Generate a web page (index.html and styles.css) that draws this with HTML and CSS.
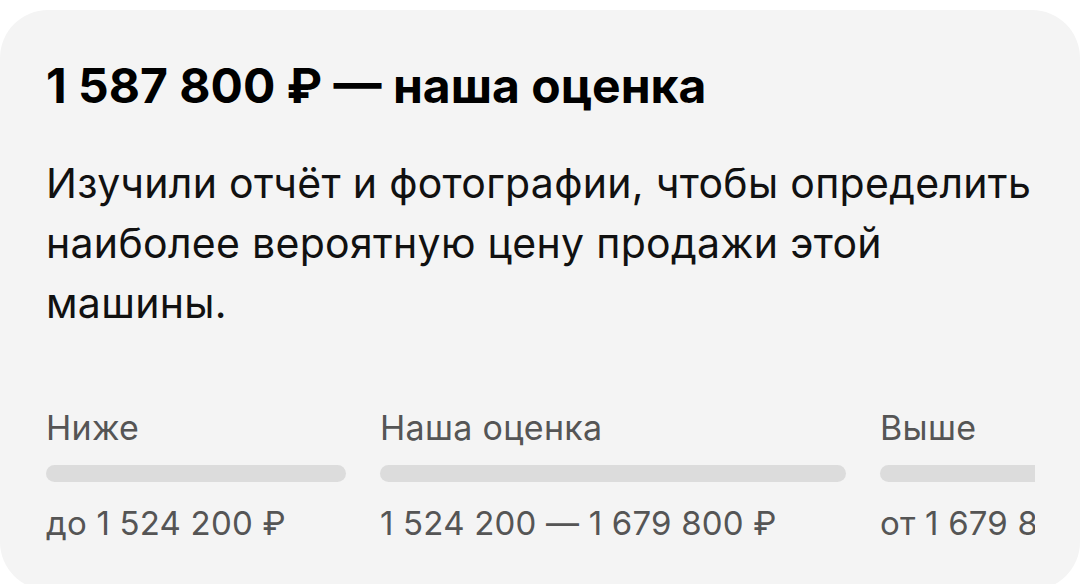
FILE: index.html
```html
<!DOCTYPE html>
<html lang="ru">
<head>
  <meta charset="UTF-8" />
  <meta name="viewport" content="width=device-width, initial-scale=1" />
  <title>Оценка автомобиля</title>
  <link rel="stylesheet" href="styles.css">
</head>
<body>
  <div class="estimate-card">
    <h1 class="estimate-title">1 587 800 ₽ — наша оценка</h1>
    <p class="estimate-text">Изучили отчёт и фотографии, чтобы определить наиболее вероятную цену продажи этой машины.</p>

    <div class="range">
      <div class="range-item range-low">
        <div class="range-label">Ниже</div>
        <div class="range-bar"></div>
        <div class="range-value">до 1 524 200 ₽</div>
      </div>
      <div class="range-item range-mid">
        <div class="range-label">Наша оценка</div>
        <div class="range-bar"></div>
        <div class="range-value">1 524 200 — 1 679 800 ₽</div>
      </div>
      <div class="range-item range-high">
        <div class="range-label">Выше</div>
        <div class="range-bar"></div>
        <div class="range-value">от 1 679 800 ₽</div>
      </div>
    </div>
  </div>
</body>
</html>
```

FILE: styles.css
```css
body {
  margin: 0;
  background: #fff;
  font-family: Inter, 'Noto Sans', sans-serif;
  color: #000;
}

.estimate-card {
  margin-top: 10px;
  height: 580px;
  box-sizing: border-box;
  padding: 47px 45px 0 46px;
  background: #f4f4f4;
  border-radius: 48px;
}

.estimate-title {
  margin: 0;
  font-size: 48px;
  line-height: 58px;
  font-weight: 700;
}

.estimate-text {
  margin: 38px 0 0;
  font-size: 41px;
  line-height: 60px;
  letter-spacing: 0.3px;
  color: #111;
}

/* price range, scrolls sideways */
.range {
  display: flex;
  gap: 34px;
  margin-top: 75px;
  overflow: hidden;
}

.range-item {
  flex-shrink: 0;
}

.range-low { width: 300px; }
.range-mid { width: 466px; }
.range-high { width: 300px; }

.range-label,
.range-value {
  line-height: 40px;
  color: #555;
  white-space: nowrap;
}

.range-label {
  font-size: 34px;
  letter-spacing: 0.3px;
}

.range-value {
  font-size: 33px;
  letter-spacing: 0.2px;
}

.range-bar {
  height: 17px;
  margin: 17px 0 21px;
  background: #dcdcdc;
  border-radius: 9px;
}
```
